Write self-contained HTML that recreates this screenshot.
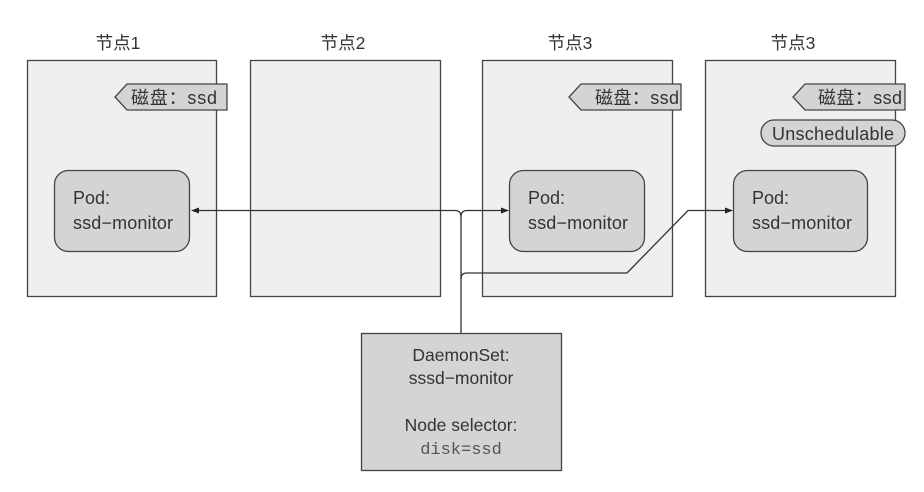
<!DOCTYPE html>
<html><head><meta charset="utf-8"><style>
body{margin:0;background:#fff;width:924px;height:487px;overflow:hidden}
svg text{font-family:"Liberation Sans","Noto Sans CJK SC",sans-serif;fill:#333}
svg text.mono{font-family:"Liberation Mono",monospace;fill:#555}
</style></head><body>
<svg width="924" height="487" xmlns="http://www.w3.org/2000/svg">
<g font-size="17.5" text-anchor="middle">
<text x="118" y="49">节点1</text><text x="343" y="49">节点2</text>
<text x="570" y="49">节点3</text><text x="793" y="49">节点3</text>
</g>
<g fill="#efefef" stroke="#444" stroke-width="1.3">
<rect x="27.5" y="60.5" width="189" height="236"/>
<rect x="250.5" y="60.5" width="190" height="236"/>
<rect x="482.5" y="60.5" width="190" height="236"/>
<rect x="705.5" y="60.5" width="190" height="236"/>
</g>
<g fill="#d4d4d4" stroke="#444" stroke-width="1.3">
<polygon points="227,84 127,84 115,97 127,110 227,110"/>
<polygon points="681,84 581,84 569,97 581,110 681,110"/>
<polygon points="905,84 805,84 793,97 805,110 905,110"/>
<rect x="761" y="120" width="144" height="26" rx="13"/>
<rect x="54.5" y="170.5" width="135" height="81" rx="14"/>
<rect x="509.5" y="170.5" width="135" height="81" rx="14"/>
<rect x="733.5" y="170.5" width="134" height="81" rx="14"/>
<rect x="361.5" y="333.5" width="200" height="137"/>
</g>
<g font-size="18">
<text x="131" y="104" textLength="86">磁盘：ssd</text>
<text x="595" y="104" textLength="84">磁盘：ssd</text>
<text x="818" y="104" textLength="84">磁盘：ssd</text>
<text x="833" y="140" text-anchor="middle" textLength="122">Unschedulable</text>
<text x="73" y="204">Pod:</text><text x="73" y="229" textLength="100">ssd−monitor</text>
<text x="528" y="204">Pod:</text><text x="528" y="229" textLength="100">ssd−monitor</text>
<text x="752" y="204">Pod:</text><text x="752" y="229" textLength="100">ssd−monitor</text>
</g>
<g font-size="17.5" text-anchor="middle">
<text x="461" y="361">DaemonSet:</text>
<text x="461" y="384">sssd−monitor</text>
<text x="461" y="431">Node selector:</text>
<text x="461" y="454" class="mono" font-size="17">disk=ssd</text>
</g>
<g fill="none" stroke="#333" stroke-width="1.3">
<path d="M198 210.5 H455 Q461 210.5 461 217 V333"/>
<path d="M461 217 Q461 210.5 467 210.5 H502"/>
<path d="M461 279 Q461 273 467 273 H627 L688 210.5 H726"/>
</g>
<g fill="#222">
<polygon points="191,210.5 199,207.5 199,213.5"/>
<polygon points="509,210.5 501,207.5 501,213.5"/>
<polygon points="733,210.5 725,207.5 725,213.5"/>
</g>
</svg>
</body></html>
